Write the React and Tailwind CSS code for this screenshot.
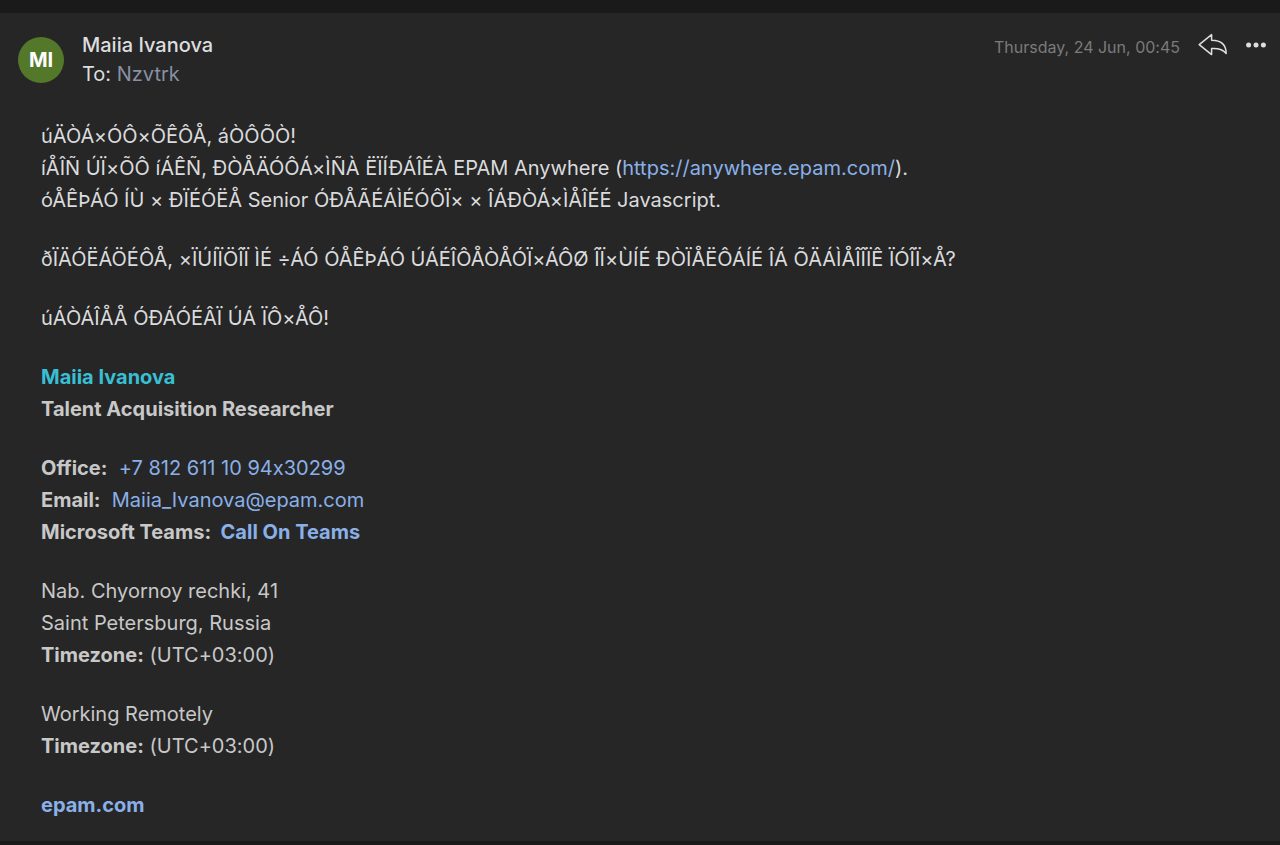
import React from "react";

const link = "text-[#8ab0e8] hover:underline";

function ReplyIcon() {
  return (
    <svg width="30" height="24" viewBox="0 0 30 24" fill="none" stroke="currentColor" strokeWidth="1.5" strokeLinejoin="round" aria-hidden="true">
      <path d="M1.2 11.6 L13.6 1.6 V7.2 C22.6 7.2 28.2 11.6 28.2 20.6 C25.2 16.6 20.6 15.2 13.6 15.6 V21.6 Z" />
    </svg>
  );
}

function MoreIcon() {
  return (
    <svg width="20" height="6" viewBox="0 0 20 6" fill="currentColor" aria-hidden="true">
      <circle cx="2.6" cy="3" r="2.5" />
      <circle cx="10" cy="3" r="2.5" />
      <circle cx="17.4" cy="3" r="2.5" />
    </svg>
  );
}

function Header() {
  return (
    <header className="flex items-start justify-between pl-[18px] pr-3.5">
      <div className="flex items-center gap-[18px] pt-4">
        <div className="flex size-[46px] shrink-0 items-center justify-center rounded-full bg-[#54782a] text-xl font-bold text-white">
          MI
        </div>
        <div className="text-xl leading-[29px] text-[#dcdddf]">
          <h1 className="font-medium">Maiia Ivanova</h1>
          <p>
            To: <span className="text-[#8890a4]">Nzvtrk</span>
          </p>
        </div>
      </div>
      <div className="flex items-center gap-[18px] pt-4 text-[#dedede]">
        <time className="pt-1 text-base text-[#7b7b7b]">Thursday, 24 Jun, 00:45</time>
        <button type="button" aria-label="Reply">
          <ReplyIcon />
        </button>
        <button type="button" aria-label="More actions">
          <MoreIcon />
        </button>
      </div>
    </header>
  );
}

function Signature() {
  return (
    <>
      <div className="font-bold">
        <p className="text-[#39bfd3]">Maiia Ivanova</p>
        <p>Talent Acquisition Researcher</p>
      </div>
      <div>
        <p>
          <b>Office:</b>&nbsp; <a className={link} href="tel:+78126111094">+7 812 611 10 94x30299</a>
        </p>
        <p>
          <b>Email:</b>&nbsp; <a className={link} href="mailto:Maiia_Ivanova@epam.com">Maiia_Ivanova@epam.com</a>
        </p>
        <p className="font-bold">
          Microsoft Teams:&nbsp; <a className={link} href="#teams">Call On Teams</a>
        </p>
      </div>
      <div>
        <p>Nab. Chyornoy rechki, 41</p>
        <p>Saint Petersburg, Russia</p>
        <p>
          <b>Timezone:</b> (UTC+03:00)
        </p>
      </div>
      <div>
        <p>Working Remotely</p>
        <p>
          <b>Timezone:</b> (UTC+03:00)
        </p>
      </div>
      <p className="font-bold">
        <a className={link} href="https://epam.com">epam.com</a>
      </p>
    </>
  );
}

export default function App() {
  return (
    <div className="min-h-screen border-t-[13px] border-b-4 border-[#1a1a1a] bg-[#262626] pt-0.5 font-['Inter','Liberation_Sans',sans-serif] [font-feature-settings:'calt'_0]">
      <Header />
      <main className="flex flex-col gap-[27px] px-[41px] pt-[31px] pb-5 text-xl leading-8 text-[#c8c8c8]">
        <div className="text-[#dadbdd]">
          <p>úÄÒÁ×ÓÔ×ÕÊÔÅ, áÒÔÕÒ!</p>
          <p>
            íÅÎÑ ÚÏ×ÕÔ íÁÊÑ, ÐÒÅÄÓÔÁ×ÌÑÀ ËÏÍÐÁÎÉÀ EPAM Anywhere (
            <a className={link} href="https://anywhere.epam.com/">https://anywhere.epam.com/</a>).
          </p>
          <p>óÅÊÞÁÓ ÍÙ × ÐÏÉÓËÅ Senior ÓÐÅÃÉÁÌÉÓÔÏ× × ÎÁÐÒÁ×ÌÅÎÉÉ Javascript.</p>
        </div>
        <p className="text-[#dadbdd]">
          ðÏÄÓËÁÖÉÔÅ, ×ÏÚÍÏÖÎÏ ÌÉ ÷ÁÓ ÓÅÊÞÁÓ ÚÁÉÎÔÅÒÅÓÏ×ÁÔØ ÎÏ×ÙÍÉ ÐÒÏÅËÔÁÍÉ ÎÁ ÕÄÁÌÅÎÎÏÊ ÏÓÎÏ×Å?
        </p>
        <p className="text-[#dadbdd]">úÁÒÁÎÅÅ ÓÐÁÓÉÂÏ ÚÁ ÏÔ×ÅÔ!</p>
        <Signature />
      </main>
    </div>
  );
}
